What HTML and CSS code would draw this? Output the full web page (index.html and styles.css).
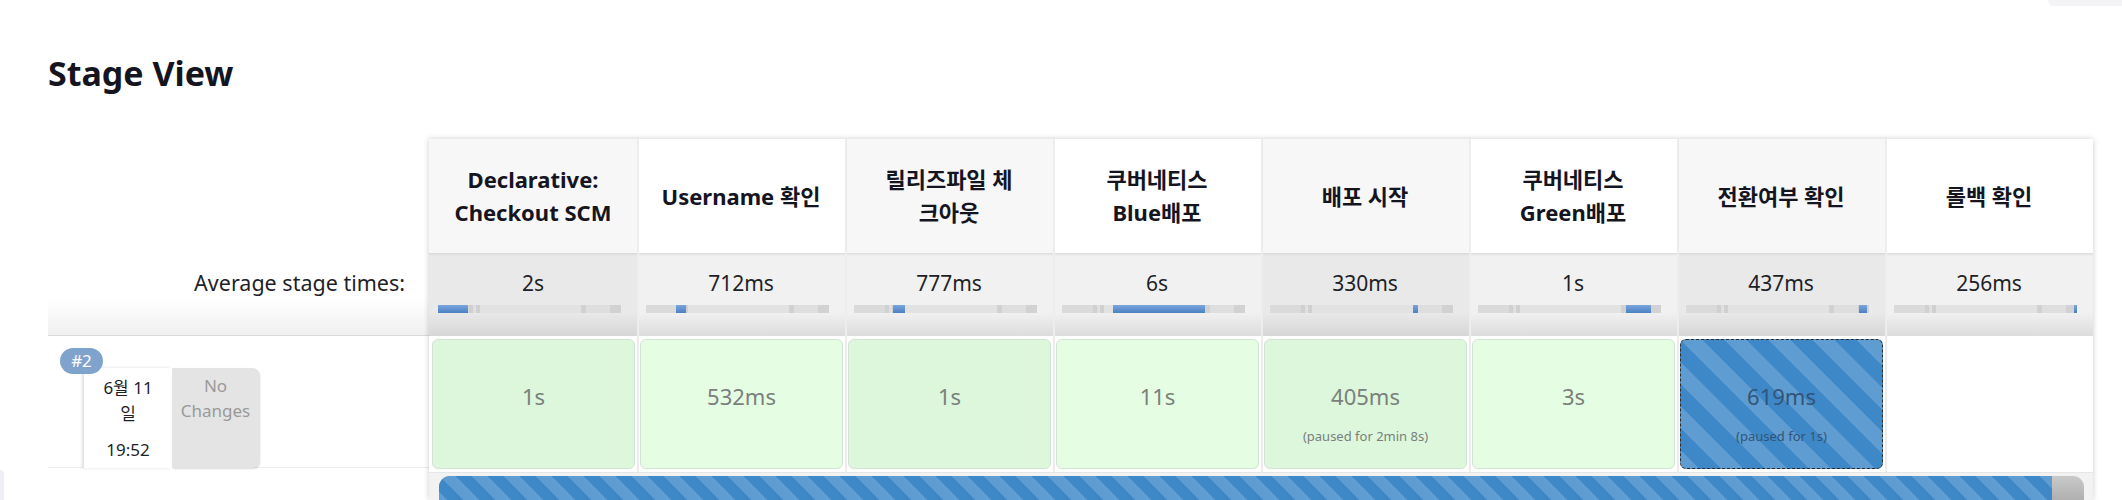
FILE: index.html
```html
<!DOCTYPE html>
<html lang="ko">
<head>
<meta charset="utf-8">
<title>Stage View</title>
<link rel="stylesheet" href="styles.css">
</head>
<body>
<div class="page">
  <div class="corner"></div>
  <div class="corner-left"></div>
  <h1 class="title">Stage View</h1>
  <div class="stage-view">
    <div class="left">
      <div class="left-head"></div>
      <div class="avg-label">Average stage times:</div>
      <div class="build-info">
        <div class="build-boxes">
          <span class="badge">#2</span>
          <div class="date-box">
            <div class="date">6월 11일</div>
            <div class="time">19:52</div>
          </div>
          <div class="changes">No Changes</div>
        </div>
      </div>
    </div>
    <div class="stages">
      <div class="row">
        <div class="cell head odd"><span>Declarative:<br>Checkout SCM</span></div>
        <div class="cell head"><span>Username 확인</span></div>
        <div class="cell head odd"><span>릴리즈파일 체<br>크아웃</span></div>
        <div class="cell head"><span>쿠버네티스<br>Blue배포</span></div>
        <div class="cell head odd"><span>배포 시작</span></div>
        <div class="cell head"><span>쿠버네티스<br>Green배포</span></div>
        <div class="cell head odd"><span>전환여부 확인</span></div>
        <div class="cell head"><span>롤백 확인</span></div>
      </div>
      <div class="row">
        <div class="cell avg odd"><div class="avg-value">2s</div><div class="avg-bar"><div class="avg-fill" style="margin-left:0px;width:30px"></div></div></div>
        <div class="cell avg"><div class="avg-value">712ms</div><div class="avg-bar"><div class="avg-fill" style="margin-left:30px;width:10px"></div></div></div>
        <div class="cell avg"><div class="avg-value">777ms</div><div class="avg-bar"><div class="avg-fill" style="margin-left:39px;width:12px"></div></div></div>
        <div class="cell avg"><div class="avg-value">6s</div><div class="avg-bar"><div class="avg-fill" style="margin-left:51px;width:92px"></div></div></div>
        <div class="cell avg odd"><div class="avg-value">330ms</div><div class="avg-bar"><div class="avg-fill" style="margin-left:143px;width:5px"></div></div></div>
        <div class="cell avg"><div class="avg-value">1s</div><div class="avg-bar"><div class="avg-fill" style="margin-left:148px;width:25px"></div></div></div>
        <div class="cell avg odd"><div class="avg-value">437ms</div><div class="avg-bar"><div class="avg-fill" style="margin-left:173px;width:8px"></div></div></div>
        <div class="cell avg"><div class="avg-value">256ms</div><div class="avg-bar"><div class="avg-fill" style="margin-left:180px;width:3px"></div></div></div>
      </div>
      <div class="row">
        <div class="cell build"><div class="stage-box success odd"><div class="dur">1s</div></div></div>
        <div class="cell build"><div class="stage-box success"><div class="dur">532ms</div></div></div>
        <div class="cell build"><div class="stage-box success odd"><div class="dur">1s</div></div></div>
        <div class="cell build"><div class="stage-box success"><div class="dur">11s</div></div></div>
        <div class="cell build"><div class="stage-box success odd"><div class="dur">405ms</div><div class="paused">(paused for 2min 8s)</div></div></div>
        <div class="cell build"><div class="stage-box success"><div class="dur">3s</div></div></div>
        <div class="cell build"><div class="stage-box running"><div class="dur">619ms</div><div class="paused">(paused for 1s)</div></div></div>
        <div class="cell build"></div>
      </div>
      <div class="progress-row">
        <div class="progress"><div class="progress-fill" style="width:98.05%"></div></div>
      </div>
    </div>
  </div>
</div>
</body>
</html>
```

FILE: styles.css
```css
html, body {
  margin: 0;
  padding: 0;
  height: 500px;
  overflow: hidden;
  background: #ffffff;
}

body {
  font-family: "Noto Sans", "Noto Sans CJK KR", sans-serif;
  color: #1b1b24;
}

.page {
  position: relative;
  padding: 53px 0 0 48px;
}

.corner {
  position: absolute;
  top: 0;
  right: 0;
  width: 74px;
  height: 6px;
  background: #f4f4f6;
  border-radius: 0 0 0 16px;
}

.corner-left {
  position: absolute;
  left: 0;
  top: 470px;
  width: 4px;
  height: 40px;
  background: #efeff6;
  border-radius: 0 8px 0 0;
}

.title {
  margin: 0 0 45px;
  font-size: 34px;
  line-height: 41px;
  font-weight: 700;
  color: #15151f;
}

.stage-view {
  display: flex;
  align-items: flex-start;
}

.left {
  width: 381px;
  flex: none;
}

.left-head {
  height: 114px;
}

.avg-label {
  box-sizing: border-box;
  height: 83px;
  padding: 15px 24px 0 0;
  text-align: right;
  font-size: 21.5px;
  line-height: 30px;
  color: #1f1f28;
  border-bottom: 1px solid #dadada;
  background: linear-gradient(#ffffff 0, #ffffff 55%, #f0f0f0 100%);
}

.build-info {
  box-sizing: border-box;
  height: 132px;
  padding: 32px 0 0 36px;
  border-bottom: 1px solid #ececec;
}

.build-boxes {
  position: relative;
  display: flex;
}

.badge {
  position: absolute;
  left: -24px;
  top: -20px;
  z-index: 2;
  width: 43px;
  height: 26px;
  border-radius: 13px;
  background: #7fa3cd;
  color: #ffffff;
  font-size: 17px;
  line-height: 26px;
  text-align: center;
}

.date-box {
  box-sizing: border-box;
  width: 88px;
  height: 100px;
  padding-top: 7px;
  background: #ffffff;
  box-shadow: -2px 0 3px rgba(0, 0, 0, 0.13);
  text-align: center;
  font-size: 17px;
  line-height: 26px;
  color: #1f1f28;
}

.date {
  padding: 0 12px;
  word-break: break-all;
}

.time {
  margin-top: 10px;
}

.changes {
  box-sizing: border-box;
  width: 87px;
  height: 100px;
  padding: 5px 2px 0;
  background: #e4e4e4;
  border-radius: 0 7px 7px 0;
  box-shadow: 1px 1px 2px rgba(0, 0, 0, 0.15);
  color: #9a9a9a;
  font-size: 17px;
  line-height: 25px;
  text-align: center;
}

.stages {
  width: 1664px;
  flex: none;
  background: #ffffff;
  box-shadow: 0 0 6px rgba(0, 0, 0, 0.2);
}

.row {
  display: flex;
}

.cell {
  box-sizing: border-box;
  width: 208px;
  flex: none;
  box-shadow: inset 2px 0 0 #ededed;
}

.cell:first-child {
  box-shadow: none;
}

.head {
  height: 114px;
  display: flex;
  align-items: center;
  justify-content: center;
  text-align: center;
  font-size: 22px;
  font-weight: 700;
  line-height: 33px;
  white-space: nowrap;
  background: #ffffff;
  color: #15151f;
}

.head.odd {
  background: #f7f7f7;
}

.avg {
  height: 83px;
  padding-top: 15px;
  background: linear-gradient(#dcdcdc 0, #f1f1f1 3px, #f1f1f1 72%, #dcdcdc 100%);
}

.avg.odd {
  background: linear-gradient(#d8d8d8 0, #e9e9e9 3px, #e9e9e9 72%, #d6d6d6 100%);
}

.avg-value {
  text-align: center;
  font-size: 21px;
  line-height: 30px;
  color: #1f1f28;
}

.avg-bar {
  display: flex;
  width: 183px;
  height: 8px;
  margin: 7px 0 0 9px;
  background: linear-gradient(to right,
    #dadada 0, #dadada 17%, #d0d0d0 17%, #d0d0d0 19%, #e0e0e0 19%, #e0e0e0 21%,
    #d0d0d0 21%, #d0d0d0 23%, #e2e2e2 23%, #e2e2e2 78%, #d2d2d2 78%, #d2d2d2 81%,
    #dedede 81%, #dedede 94%, #d2d2d2 94%, #d2d2d2 100%);
}

.avg-fill {
  height: 8px;
  background: linear-gradient(#7ba6de, #4b80c3);
}

.build {
  height: 136px;
  padding: 3px 2px 3px 3px;
  box-shadow: inset 2px 0 0 #ececec;
}

.stage-box {
  box-sizing: border-box;
  height: 130px;
  padding-top: 41px;
  border-radius: 6px;
  border: 1px solid #d3e3d3;
  text-align: center;
}

.success {
  background: #e5fee3;
}

.success.odd {
  background: #dcf7dc;
}

.running {
  border: 1px dashed #2a2a2a;
  background-color: #3f88c8;
  background-image: linear-gradient(45deg,
    rgba(255, 255, 255, 0.17) 25%, transparent 25%, transparent 50%,
    rgba(255, 255, 255, 0.17) 50%, rgba(255, 255, 255, 0.17) 75%, transparent 75%, transparent);
  background-size: 44px 44px;
}

.dur {
  font-size: 22px;
  line-height: 30px;
  color: #7b807b;
}

.paused {
  margin-top: 16px;
  font-size: 13px;
  line-height: 18px;
  color: #7a7f7a;
}

.running .dur,
.running .paused {
  color: #31557a;
}

.progress-row {
  box-sizing: border-box;
  height: 28px;
  padding: 3px 9px 0 10px;
  background: #f2f2f2;
  border-top: 1px solid #e6e6e6;
}

.progress {
  height: 24px;
  border-radius: 11px 11px 0 0;
  background: linear-gradient(#c9c9c9, #b0b0b0);
  overflow: hidden;
}

.progress-fill {
  height: 24px;
  background-color: #3f88c8;
  background-image: linear-gradient(45deg,
    rgba(255, 255, 255, 0.17) 25%, transparent 25%, transparent 50%,
    rgba(255, 255, 255, 0.17) 50%, rgba(255, 255, 255, 0.17) 75%, transparent 75%, transparent);
  background-size: 32px 32px;
}
```
